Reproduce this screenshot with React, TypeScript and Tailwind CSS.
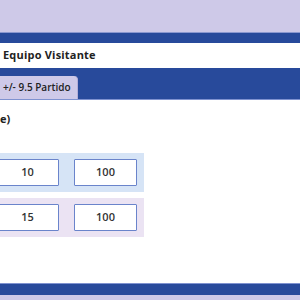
export default function App() {
  const rows = [
    { bg: "bg-[#d6e4f6]", a: "10", b: "100" },
    { bg: "bg-[#ebe3f3]", a: "15", b: "100" },
  ];

  return (
    <div className="w-[300px] h-[300px] overflow-hidden flex flex-col bg-[#cec9e8] font-['Open_Sans',sans-serif] text-[#222]">
      {/* Cabecera lila */}
      <div className="h-[32px] shrink-0" />

      {/* Franja azul superior */}
      <div className="h-[11px] shrink-0 bg-[#284a9b] border-t border-[#8b98cf]" />

      {/* Titulo del equipo */}
      <div className="h-[25px] shrink-0 bg-white flex items-center pl-[3px]">
        <span className="text-[11px] font-bold tracking-[0.2px]">Equipo Visitante</span>
      </div>

      {/* Barra de pestañas */}
      <div className="h-[32px] shrink-0 bg-[#284a9b] border-b border-[#7f92d0] flex items-end">
        <div className="h-[23px] w-[78px] bg-[#cec9e8] rounded-tr-[4px] border-r border-[#b4afd8] flex items-center pl-[3px]">
          <span className="text-[10px] font-semibold">+/- 9.5 Partido</span>
        </div>
      </div>

      {/* Contenido */}
      <div className="flex-1 bg-white flex flex-col">
        <div className="h-[15px] mt-[12px] flex items-center">
          <span className="text-[11px] font-bold">e)</span>
        </div>
        <div className="mt-[26px] flex flex-col gap-[6px] ml-[-12px]">
          {rows.map((r, i) => (
            <div key={i} className={`${r.bg} w-[156px] h-[39px] flex items-center pl-[8px] pr-[7px] gap-[15px]`}>
              <div className="w-[63px] h-[27px] bg-white border border-[#6a84cb] rounded-[1px] flex items-center justify-center text-[11px] font-semibold text-[#333]">
                {r.a}
              </div>
              <div className="w-[63px] h-[27px] bg-white border border-[#6a84cb] rounded-[1px] flex items-center justify-center text-[11px] font-semibold text-[#333]">
                {r.b}
              </div>
            </div>
          ))}
        </div>
      </div>

      {/* Pie azul */}
      <div className="h-[12px] shrink-0 bg-[#284a9b] border-t border-[#7f92d0]" />
      <div className="h-[5px] shrink-0" />
    </div>
  );
}
